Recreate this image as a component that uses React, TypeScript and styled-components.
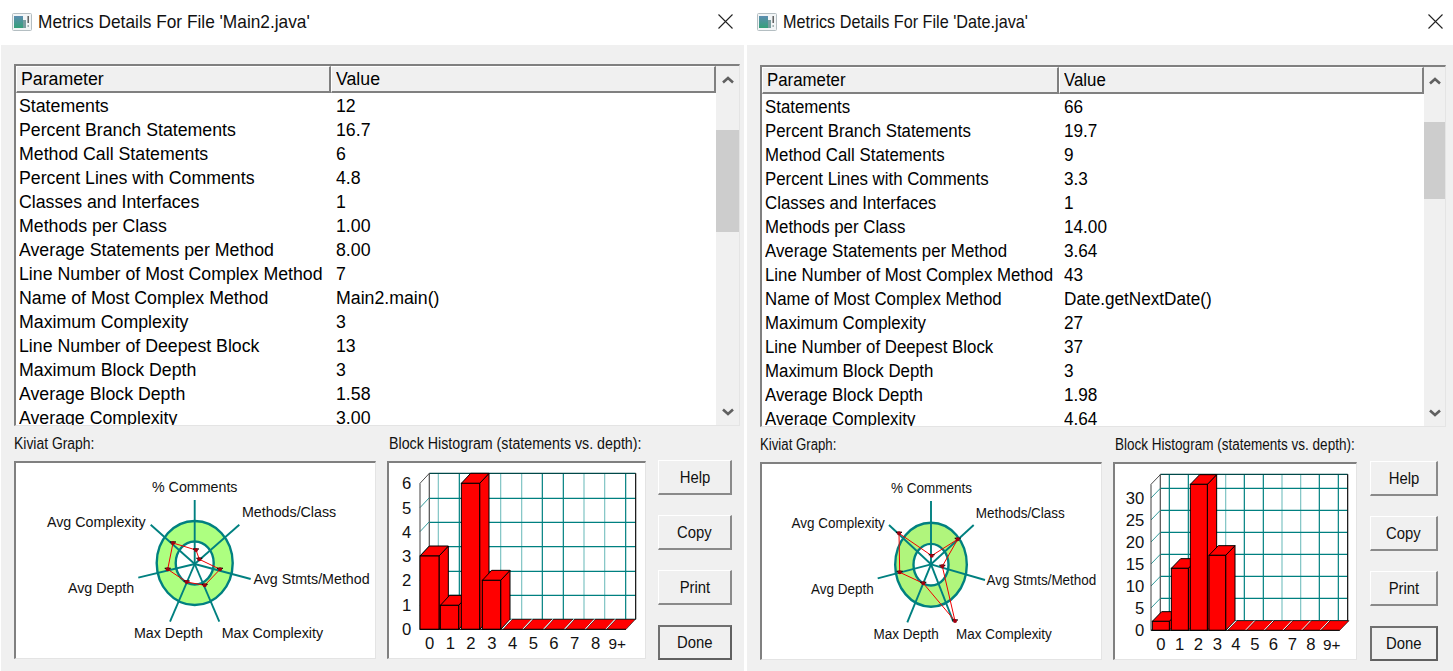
import React from "react";
import styled, { createGlobalStyle } from "styled-components";

const Global = createGlobalStyle`
  html, body { margin: 0; padding: 0; background: #fff; overflow: hidden; }
  #root { width: 1453px; height: 671px; }
`;

const FONT = `"Liberation Sans", Arial, sans-serif`;

const Page = styled.div`
  display: flex;
  width: 1453px;
  height: 671px;
  overflow: hidden;
  background: #fff;
  font-family: ${FONT};
  color: #000;
`;

const Window = styled.section<{ $width: number; $left: number }>`
  display: flex;
  flex-direction: column;
  flex: none;
  width: ${(p) => p.$width}px;
  margin-left: ${(p) => p.$left}px;
`;

const TitleBar = styled.header<{ $x: number }>`
  display: flex;
  box-sizing: border-box;
  align-items: center;
  height: 45px;
  flex: none;
  padding: 0 ${(p) => p.$x}px 2px;
  gap: 6px;
`;

const TitleText = styled.h1`
  margin: 0;
  flex: 1;
  font-size: 19px;
  font-weight: 400;
  color: #111;
  white-space: nowrap;
`;

/* The source picture was stretched, so every text is narrower than its font. */
const Squeezed = styled.span<{ $sx: number; $origin?: string }>`
  display: inline-block;
  transform: scaleX(${(p) => p.$sx});
  transform-origin: ${(p) => p.$origin ?? "left"} center;
`;

const Body = styled.div<{ $top: number }>`
  flex: 1;
  background: #f0f0f0;
  padding: ${(p) => p.$top}px 0 0 13px;
`;

const TableFrame = styled.div<{ $width: number }>`
  display: flex;
  box-sizing: border-box;
  width: ${(p) => p.$width}px;
  height: 362px;
  border-top: 2px solid #808080;
  border-left: 2px solid #808080;
  border-right: 1px solid #e4e4e4;
  border-bottom: 1px solid #e4e4e4;
  background: #fff;
`;

const TableMain = styled.div`
  flex: 1;
  min-width: 0;
  overflow: hidden;
`;

const HeaderRow = styled.div<{ $col: number }>`
  display: grid;
  grid-template-columns: ${(p) => p.$col}px 1fr;
  height: 27px;
  margin-bottom: 1px;
`;

const HeaderCell = styled.div`
  box-sizing: border-box;
  height: 27px;
  line-height: 25px;
  padding-left: 4px;
  font-size: 18px;
  background: #f0f0f0;
  border-top: 1px solid #fff;
  border-left: 1px solid #fff;
  border-right: 2px solid #808080;
  border-bottom: 2px solid #808080;
  white-space: nowrap;
`;

const Row = styled.div<{ $col: number }>`
  display: grid;
  grid-template-columns: ${(p) => p.$col}px 1fr;
  height: 24px;
  line-height: 24px;
  font-size: 18px;
  white-space: nowrap;
`;

const ParamCell = styled.div`
  padding-left: 3px;
`;

const ValueCell = styled.div`
  padding-left: 5px;
`;

const Scrollbar = styled.div<{ $width: number }>`
  display: flex;
  flex-direction: column;
  flex: none;
  width: ${(p) => p.$width}px;
  background: #f0f0f0;
`;

const ScrollArrow = styled.div`
  display: flex;
  align-items: center;
  justify-content: center;
  flex: none;
  height: 27px;
`;

const ScrollThumb = styled.div<{ $top: number; $height: number }>`
  flex: none;
  margin-top: ${(p) => p.$top}px;
  height: ${(p) => p.$height}px;
  background: #cdcdcd;
`;

const ScrollSpacer = styled.div`
  flex: 1;
`;

const Lower = styled.div`
  display: flex;
`;

const Column = styled.div<{ $width: number; $gap: number }>`
  flex: none;
  width: ${(p) => p.$width}px;
  margin-right: ${(p) => p.$gap}px;
`;

const GroupLabel = styled.div<{ $x: number }>`
  height: 35px;
  line-height: 35px;
  padding-left: ${(p) => p.$x}px;
  font-size: 16px;
  color: #111;
  white-space: nowrap;
`;

const ChartBox = styled.div`
  box-sizing: border-box;
  height: 198px;
  background: #fff;
  border-top: 2px solid #808080;
  border-left: 2px solid #808080;
  border-right: 1px solid #e4e4e4;
  border-bottom: 1px solid #e4e4e4;
  svg { display: block; width: 100%; height: 100%; }
`;

const Buttons = styled.div<{ $width: number }>`
  display: flex;
  flex-direction: column;
  gap: 20px;
  flex: none;
  width: ${(p) => p.$width}px;
  padding-top: 34px;
`;

const Btn = styled.button<{ $primary?: boolean }>`
  box-sizing: border-box;
  height: 35px;
  width: 100%;
  padding: 0;
  font-family: ${FONT};
  font-size: 16.5px;
  color: #111;
  background: #f0f0f0;
  border-style: solid;
  border-width: ${(p) => (p.$primary ? "2px" : "1px 2px 2px 1px")};
  border-color: ${(p) =>
    p.$primary ? "#707070 #606060 #606060 #707070" : "#fff #8a8a8a #8a8a8a #fff"};
`;

const ChartText = styled.text<{ $size: number }>`
  font-family: ${FONT};
  font-size: ${(p) => p.$size}px;
  fill: #111;
`;

type Pt = [number, number];

interface KiviatProps {
  box: string;
  center: Pt;
  outer: Pt;
  inner: Pt;
  ringCenter: Pt;
  spokes: Pt[];
  points: Pt[];
  labels: { t: string; x: number; y: number }[];
  fill: string;
  sx: number;
}

function Kiviat(p: KiviatProps) {
  return (
    <svg viewBox={p.box}>
      <ellipse cx={p.ringCenter[0]} cy={p.ringCenter[1]} rx={p.outer[0]} ry={p.outer[1]} fill={p.fill} stroke="#008080" strokeWidth="2.4" />
      <ellipse cx={p.ringCenter[0]} cy={p.ringCenter[1]} rx={p.inner[0]} ry={p.inner[1]} fill="#fff" stroke="#008080" strokeWidth="2.4" />
      {p.spokes.map((s, i) => (
        <line key={i} x1={p.center[0]} y1={p.center[1]} x2={s[0]} y2={s[1]} stroke="#008080" strokeWidth="1.9" />
      ))}
      <polygon points={p.points.map((q) => q.join(",")).join(" ")} fill="none" stroke="#f00000" strokeWidth="1" />
      {p.points.map((q, i) => (
        <g key={i}>
          <line x1={q[0] - 3} y1={q[1] - 1} x2={q[0] + 3} y2={q[1] - 1} stroke="#000" strokeWidth="1.2" />
          <circle cx={q[0]} cy={q[1]} r="2" fill="#a00010" />
        </g>
      ))}
      {p.labels.map((l) => (
        <ChartText key={l.t} transform={`translate(${l.x} ${l.y}) scale(${p.sx} 1)`} $size={15.5}>
          {l.t}
        </ChartText>
      ))}
    </svg>
  );
}

interface HistProps {
  box: string;
  wall: { x0: number; x1: number; top: number; bottom: number };
  front: { x: number; top: number; bottom: number };
  dx: number;
  dy: number;
  hLines: number[];
  vLines: { x: number; c: string }[];
  ticks: { t: string; y: number; x: number }[];
  diag: number[];
  bars: { x: number; w: number; top: number }[];
  zeros: number[];
  zeroW: number;
  xLabels: number[];
  labelY: number;
}

function Histogram(p: HistProps) {
  const names = ["0", "1", "2", "3", "4", "5", "6", "7", "8", "9+"];
  const b = p.front.bottom;
  return (
    <svg viewBox={p.box}>
      {p.vLines.map((v) => (
        <line key={v.x} x1={v.x} y1={p.wall.top} x2={v.x} y2={p.wall.bottom} stroke={v.c} strokeWidth="3.6" />
      ))}
      {p.hLines.map((y) => (
        <line key={y} x1={p.wall.x0} y1={y} x2={p.wall.x1} y2={y} stroke="#008080" strokeWidth="3.8" />
      ))}
      <line x1={p.wall.x0} y1={p.wall.top} x2={p.wall.x1} y2={p.wall.top} stroke="#004848" strokeWidth="3.8" />
      <line x1={p.wall.x1} y1={p.wall.top} x2={p.wall.x1} y2={p.wall.bottom} stroke="#101010" strokeWidth="3.6" />
      <line x1={p.wall.x0} y1={p.wall.top} x2={p.wall.x0} y2={p.wall.bottom} stroke="#606060" strokeWidth="4" />
      {p.diag.map((y) => (
        <line key={y} x1={p.front.x} y1={y} x2={p.front.x + p.dx} y2={y - p.dy} stroke="#008080" strokeWidth="2.4" />
      ))}
      <line x1={p.front.x} y1={p.front.top} x2={p.front.x} y2={b} stroke="#404040" strokeWidth="3" />
      <line x1={p.front.x} y1={p.front.top} x2={p.front.x + p.dx} y2={p.front.top - p.dy} stroke="#202020" strokeWidth="2.4" />
      {p.bars.map((r) => (
        <g key={r.x} stroke="#000" strokeWidth="3" fill="#ff0000" strokeLinejoin="miter">
          <polygon points={`${r.x + r.w},${r.top} ${r.x + r.w + p.dx},${r.top - p.dy} ${r.x + r.w + p.dx},${b - p.dy} ${r.x + r.w},${b}`} />
          <polygon points={`${r.x},${r.top} ${r.x + p.dx},${r.top - p.dy} ${r.x + r.w + p.dx},${r.top - p.dy} ${r.x + r.w},${r.top}`} />
          <rect x={r.x} y={r.top} width={r.w} height={b - r.top} />
        </g>
      ))}
      {p.zeros.map((x) => (
        <g key={x}>
          <polygon points={`${x},${b} ${x + p.dx},${b - p.dy} ${x + p.dx + p.zeroW},${b - p.dy} ${x + p.zeroW},${b}`} fill="#ff0000" stroke="#000" strokeWidth="1.8" />
          <line x1={x - 3} y1={b} x2={x + p.dx - 3} y2={b - p.dy} stroke="#fff" strokeWidth="3" />
        </g>
      ))}
      <line x1={p.front.x} y1={b} x2={p.zeros[5] + p.zeroW} y2={b} stroke="#000" strokeWidth="3" />
      {p.ticks.map((t) => (
        <ChartText key={t.t} x={t.x} y={t.y + 18} textAnchor="end" $size={50}>
          {t.t}
        </ChartText>
      ))}
      {p.xLabels.map((x, i) => (
        <ChartText key={names[i]} x={x} y={p.labelY} textAnchor="middle" $size={i === 9 ? 46 : 50}>
          {names[i]}
        </ChartText>
      ))}
    </svg>
  );
}

const WinIcon = ({ id }: { id: string }) => (
  <svg width="20" height="18" viewBox="0 0 20 18">
    <defs>
      <linearGradient id={id} x1="0" y1="0" x2="0" y2="1">
        <stop offset="0" stopColor="#5c8db0" />
        <stop offset="1" stopColor="#34a078" />
      </linearGradient>
    </defs>
    <rect x="0.5" y="0.5" width="19" height="17" rx="1" fill="#f2f5f6" stroke="#b4bec2" />
    <rect x="2" y="3" width="9" height="12" fill={`url(#${id})`} />
    <rect x="11" y="7" width="3" height="8" fill="#7a9ea0" />
    <rect x="15.5" y="3" width="1.4" height="7" fill="#555" />
    <rect x="15.5" y="12" width="1.4" height="2" fill="#9aa" />
  </svg>
);

const CloseIcon = () => (
  <svg width="15" height="15" viewBox="0 0 15 15">
    <path d="M0.5 0.5 L14.5 14.5 M14.5 0.5 L0.5 14.5" stroke="#222" strokeWidth="1.1" fill="none" />
  </svg>
);

const Chevron = ({ down }: { down?: boolean }) => (
  <svg width="12" height="8" viewBox="0 0 12 8">
    <polyline points={down ? "1,1.5 6,6 11,1.5" : "1,6.5 6,2 11,6.5"} fill="none" stroke="#606060" strokeWidth="2.6" />
  </svg>
);

const PARAMS = [
  "Statements",
  "Percent Branch Statements",
  "Method Call Statements",
  "Percent Lines with Comments",
  "Classes and Interfaces",
  "Methods per Class",
  "Average Statements per Method",
  "Line Number of Most Complex Method",
  "Name of Most Complex Method",
  "Maximum Complexity",
  "Line Number of Deepest Block",
  "Maximum Block Depth",
  "Average Block Depth",
  "Average Complexity",
];

const LEFT_VALUES = ["12", "16.7", "6", "4.8", "1", "1.00", "8.00", "7", "Main2.main()", "3", "13", "3", "1.58", "3.00"];
const RIGHT_VALUES = ["66", "19.7", "9", "3.3", "1", "14.00", "3.64", "43", "Date.getNextDate()", "27", "37", "3", "1.98", "4.64"];

const L = "#7fc4c4";
const D = "#008080";

const leftKiviat: KiviatProps = {
  box: "16 463 359 195",
  center: [194.7, 564],
  ringCenter: [194.7, 563],
  outer: [38, 42],
  inner: [19, 21.5],
  fill: "#adff80",
  sx: 0.92,
  spokes: [[194.7, 500], [239.3, 524.7], [250.7, 579], [219.3, 621.7], [170, 621.7], [138.3, 577.7], [150.7, 524.7]],
  points: [[196, 550], [199.3, 559.3], [220, 569.3], [204.7, 585.3], [186.7, 582], [167.7, 569.3], [173, 543]],
  labels: [
    { t: "% Comments", x: 152, y: 491.7 },
    { t: "Methods/Class", x: 242, y: 516.7 },
    { t: "Avg Complexity", x: 47, y: 526.7 },
    { t: "Avg Stmts/Method", x: 253.5, y: 584.3 },
    { t: "Avg Depth", x: 68, y: 593.3 },
    { t: "Max Depth", x: 134, y: 638.3 },
    { t: "Max Complexity", x: 221.7, y: 638.3 },
  ],
};

const rightKiviat: KiviatProps = {
  box: "762 464 339 195",
  center: [931, 564.3],
  ringCenter: [931, 564.7],
  outer: [35.8, 42],
  inner: [17.5, 20.8],
  fill: "#b0f57c",
  sx: 0.87,
  spokes: [[931, 501], [973.7, 525], [985, 580], [953.3, 621.7], [907.3, 622.3], [877.7, 578.3], [889, 525]],
  points: [[931.7, 555.7], [957.7, 539.3], [942.3, 566.3], [955, 621], [923.3, 583.3], [899.7, 572.3], [899, 533.3]],
  labels: [
    { t: "% Comments", x: 891, y: 492.7 },
    { t: "Methods/Class", x: 975.7, y: 517.7 },
    { t: "Avg Complexity", x: 791.5, y: 527.7 },
    { t: "Avg Stmts/Method", x: 986.5, y: 585.3 },
    { t: "Avg Depth", x: 811, y: 594 },
    { t: "Max Depth", x: 873.5, y: 639 },
    { t: "Max Complexity", x: 956, y: 639 },
  ],
};

const leftHist: HistProps = {
  box: "27 99 768 585",
  wall: { x0: 148, x1: 767, top: 130, bottom: 568 },
  front: { x: 120, top: 160, bottom: 598 },
  dx: 28,
  dy: 30,
  hLines: [205, 277, 350, 424, 496, 568],
  vLines: [
    { x: 175, c: L }, { x: 238, c: D }, { x: 300, c: L }, { x: 362, c: L }, { x: 425, c: L },
    { x: 487, c: D }, { x: 550, c: D }, { x: 612, c: L }, { x: 674, c: L }, { x: 737, c: D },
  ],
  ticks: [
    { t: "6", y: 160, x: 94 }, { t: "5", y: 233, x: 94 }, { t: "4", y: 305, x: 94 }, { t: "3", y: 378, x: 94 },
    { t: "2", y: 451, x: 94 }, { t: "1", y: 526, x: 94 }, { t: "0", y: 598, x: 94 },
  ],
  diag: [233, 305, 378, 451, 526, 598],
  bars: [
    { x: 120, w: 57, top: 378 },
    { x: 181, w: 55, top: 526 },
    { x: 244, w: 55, top: 160 },
    { x: 307, w: 55, top: 451 },
  ],
  zeros: [369, 431, 493, 556, 618, 680],
  zeroW: 58,
  xLabels: [149, 211, 273, 336, 398, 460, 522, 584, 647, 712],
  labelY: 658,
};

const rightHist: HistProps = {
  box: "30 102 723 585",
  wall: { x0: 166, x1: 728, top: 133, bottom: 572 },
  front: { x: 138, top: 163, bottom: 601 },
  dx: 28,
  dy: 29,
  hLines: [175, 241, 307, 373, 439, 505, 572],
  vLines: [
    { x: 193, c: D }, { x: 250, c: D }, { x: 306, c: D }, { x: 362, c: L }, { x: 418, c: D },
    { x: 475, c: D }, { x: 531, c: L }, { x: 587, c: L }, { x: 643, c: D }, { x: 700, c: D },
  ],
  ticks: [
    { t: "30", y: 205, x: 118 }, { t: "25", y: 270, x: 118 }, { t: "20", y: 337, x: 118 }, { t: "15", y: 402, x: 118 },
    { t: "10", y: 468, x: 118 }, { t: "5", y: 535, x: 118 }, { t: "0", y: 600, x: 118 },
  ],
  diag: [204, 270, 336, 402, 468, 534, 601],
  bars: [
    { x: 142, w: 51, top: 574 },
    { x: 199, w: 51, top: 415 },
    { x: 256, w: 51, top: 163 },
    { x: 312, w: 50, top: 376 },
  ],
  zeros: [368, 424, 480, 536, 592, 648],
  zeroW: 56,
  xLabels: [168, 224, 280, 337, 393, 450, 505, 562, 618, 680],
  labelY: 661,
};

interface MetricsWindowProps {
  file: string;
  width: number;
  left: number;
  titleX: number;
  top: number;
  tableWidth: number;
  col: number;
  barWidth: number;
  thumbTop: number;
  thumbHeight: number;
  values: string[];
  kiviatWidth: number;
  histWidth: number;
  buttonsWidth: number;
  histGap: number;
  titleSx: number;
  rowSx: number;
  valueSx: number;
  kiviatLabelSx: number;
  histLabelSx: number;
  kiviat: KiviatProps;
  hist: HistProps;
}

function MetricsWindow(w: MetricsWindowProps) {
  return (
    <Window $width={w.width} $left={w.left}>
      <TitleBar $x={w.titleX}>
        <WinIcon id={`icon-${w.left}`} />
        <TitleText>
          <Squeezed $sx={w.titleSx}>Metrics Details For File '{w.file}'</Squeezed>
        </TitleText>
        <CloseIcon />
      </TitleBar>
      <Body $top={w.top}>
        <TableFrame $width={w.tableWidth}>
          <TableMain>
            <HeaderRow $col={w.col}>
              <HeaderCell>
                <Squeezed $sx={w.rowSx}>Parameter</Squeezed>
              </HeaderCell>
              <HeaderCell>
                <Squeezed $sx={w.rowSx}>Value</Squeezed>
              </HeaderCell>
            </HeaderRow>
            {PARAMS.map((name, i) => (
              <Row key={name} $col={w.col}>
                <ParamCell>
                  <Squeezed $sx={w.rowSx}>{name}</Squeezed>
                </ParamCell>
                <ValueCell>
                  <Squeezed $sx={w.valueSx}>{w.values[i]}</Squeezed>
                </ValueCell>
              </Row>
            ))}
          </TableMain>
          <Scrollbar $width={w.barWidth}>
            <ScrollArrow>
              <Chevron />
            </ScrollArrow>
            <ScrollThumb $top={w.thumbTop} $height={w.thumbHeight} />
            <ScrollSpacer />
            <ScrollArrow>
              <Chevron down />
            </ScrollArrow>
          </Scrollbar>
        </TableFrame>
        <Lower>
          <Column $width={w.kiviatWidth} $gap={11}>
            <GroupLabel $x={0}>
              <Squeezed $sx={w.kiviatLabelSx}>Kiviat Graph:</Squeezed>
            </GroupLabel>
            <ChartBox>
              <Kiviat {...w.kiviat} />
            </ChartBox>
          </Column>
          <Column $width={w.histWidth} $gap={w.histGap}>
            <GroupLabel $x={2}>
              <Squeezed $sx={w.histLabelSx}>Block Histogram (statements vs. depth):</Squeezed>
            </GroupLabel>
            <ChartBox>
              <Histogram {...w.hist} />
            </ChartBox>
          </Column>
          <Buttons $width={w.buttonsWidth}>
            {["Help", "Copy", "Print"].map((t) => (
              <Btn key={t}>
                <Squeezed $sx={0.9} $origin="center">{t}</Squeezed>
              </Btn>
            ))}
            <Btn $primary>
              <Squeezed $sx={0.9} $origin="center">Done</Squeezed>
            </Btn>
          </Buttons>
        </Lower>
      </Body>
    </Window>
  );
}

export default function App() {
  return (
    <Page>
      <Global />
      <MetricsWindow
        file="Main2.java"
        width={743}
        left={1}
        titleX={11}
        top={19}
        tableWidth={726}
        col={315}
        barWidth={23}
        thumbTop={37}
        thumbHeight={102}
        values={LEFT_VALUES}
        kiviatWidth={362}
        histWidth={259}
        buttonsWidth={74}
        histGap={12}
        titleSx={0.91}
        rowSx={0.985}
        valueSx={0.985}
        kiviatLabelSx={0.87}
        histLabelSx={0.89}
        kiviat={leftKiviat}
        hist={leftHist}
      />
      <MetricsWindow
        file="Date.java"
        width={706}
        left={3}
        titleX={10}
        top={20}
        tableWidth={686}
        col={297}
        barWidth={21}
        thumbTop={28}
        thumbHeight={77}
        values={RIGHT_VALUES}
        kiviatWidth={342}
        histWidth={244}
        buttonsWidth={68}
        histGap={13}
        titleSx={0.853}
        rowSx={0.935}
        valueSx={0.953}
        kiviatLabelSx={0.826}
        histLabelSx={0.845}
        kiviat={rightKiviat}
        hist={rightHist}
      />
    </Page>
  );
}
